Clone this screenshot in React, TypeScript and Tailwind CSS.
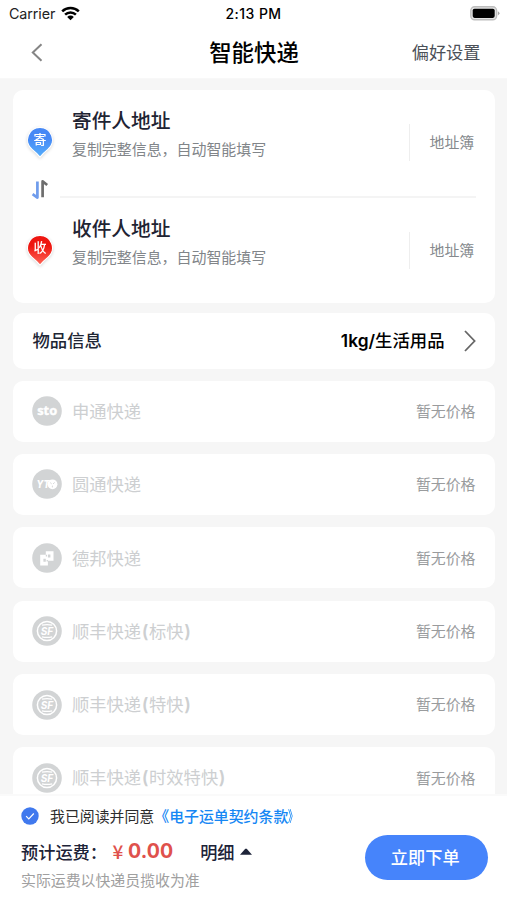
import { useState } from "react";

type Logo = "sto" | "yto" | "deppon" | "sf";

const couriers: { name: string; suffix?: string; logo: Logo }[] = [
  { name: "申通快递", logo: "sto" },
  { name: "圆通快递", logo: "yto" },
  { name: "德邦快递", logo: "deppon" },
  { name: "顺丰快递", suffix: "标快", logo: "sf" },
  { name: "顺丰快递", suffix: "特快", logo: "sf" },
  { name: "顺丰快递", suffix: "时效特快", logo: "sf" },
];

function StatusBar() {
  return (
    <div className="grid h-[27px] grid-cols-3 items-center pl-[9px] pr-[7px] font-['Inter'] text-[14.3px]">
      <div className="flex items-center gap-[6px] text-[#222]">
        <span className="tracking-[-0.1px]">Carrier</span>
        <svg width="19" height="15" viewBox="0 0 19 15">
          <g fill="none" stroke="#000" strokeWidth="2.5">
            <path d="M1.2 5.4a11.8 11.8 0 0 1 16.6 0" />
            <path d="M4.1 8.6a7.7 7.7 0 0 1 10.8 0" />
          </g>
          <path d="M6.2 10.9a4.7 4.7 0 0 1 6.6 0L9.5 14.3z" />
        </svg>
      </div>
      <span className="-ml-[2px] text-center text-[14px] font-medium tracking-[0.45px] text-black">2:13 PM</span>
      <svg className="-mr-[1px] ml-auto" width="31" height="15" viewBox="0 0 31 15">
        <rect x="0.8" y="0.8" width="25.8" height="13" rx="3.8" fill="#e4e4e4" stroke="#bdbdbd" strokeWidth="1.4" />
        <rect x="2.7" y="2.7" width="22" height="9.2" rx="1.8" />
        <path d="M27.9 5.2q3.2 2.1 0 4.4z" fill="#a5a5a5" />
      </svg>
    </div>
  );
}

function Pin({ label, from, to }: { label: string; from: string; to: string }) {
  const id = label === "寄" ? "pin-from" : "pin-to";
  return (
    <svg className="shrink-0 overflow-visible drop-shadow-[0_1px_1.5px_rgba(0,0,0,0.16)]" width="26" height="34" viewBox="0 0 26 34">
      <defs>
        <linearGradient id={id} x1="0" y1="0" x2="0" y2="1">
          <stop offset="0.35" stopColor={from} />
          <stop offset="1" stopColor={to} />
        </linearGradient>
      </defs>
      <path
        d="M13 .4a12.4 12.4 0 0 1 7.9 22Q16.6 25.8 13 30.2 9.4 25.8 5.1 22.4A12.4 12.4 0 0 1 13 .4z"
        fill={`url(#${id})`}
        stroke="#fff"
        strokeWidth="1.2"
      />
      <text x="13" y="17.3" textAnchor="middle" fill="#fff" fontSize="13" fontWeight="500">
        {label}
      </text>
    </svg>
  );
}

function AddressRow({ title, children }: { title: string; children: React.ReactNode }) {
  return (
    <div className="flex h-[62px] items-start">
      <div className="w-[45px] pt-[21px]">{children}</div>
      <div className="flex-1">
        <h2 className="text-[19.7px] font-medium leading-7 text-[#1f2433]">{title}</h2>
        <p className="mt-[3px] text-[14.95px] leading-6 text-[#818589]">复制完整信息，自动智能填写</p>
      </div>
      <button className="mt-[18px] h-[37px] w-[86px] border-l border-[#eee] pl-[20px] text-left text-[14.9px] text-[#85898d]">
        地址簿
      </button>
    </div>
  );
}

function CourierLogo({ logo }: { logo: Logo }) {
  return (
    <svg className="shrink-0" width="30" height="30" viewBox="0 0 30 30">
      <circle cx="15" cy="15" r="14.8" fill="#d2d4d5" />
      {logo === "sto" && (
        <text x="15.2" y="19" textAnchor="middle" fill="#fff" stroke="#fff" strokeWidth="0.4" fontFamily="Open Sans" fontWeight="700" fontSize="13" textLength="20" lengthAdjust="spacingAndGlyphs">
          sto
        </text>
      )}
      {logo === "yto" && (
        <>
          <text x="4.6" y="18.8" fill="#fff" fontFamily="Inter" fontWeight="800" fontStyle="italic" fontSize="11" textLength="13" lengthAdjust="spacingAndGlyphs">
            YT
          </text>
          <circle cx="20.5" cy="15.3" r="4.9" fill="#fff" />
          <path d="M18.2 13.6l1.5 1.3M22.6 13.4l-1.5 1.6M20.4 16.6v1.8" stroke="#d2d4d5" strokeWidth="0.9" fill="none" />
        </>
      )}
      {logo === "deppon" && (
        <>
          <path d="M8.2 11.8h5.6V8.2h7.7v9.6h-5.6v4.6H8.2z" fill="#fff" />
          <path d="M15.9 11.6h2.5v2.8h-2.5zM11.4 15.8h2.4v3h-2.4z" fill="#d2d4d5" />
          <path d="M13.8 11.8h1.2v1.8h-1.2zM14.6 17h1.3v1.6h-1.3z" fill="#d2d4d5" />
        </>
      )}
      {logo === "sf" && (
        <>
          <circle cx="15" cy="15" r="9.6" fill="none" stroke="#fff" strokeWidth="1.5" />
          <path d="M10 9.1Q15 8 20.2 9.1M10 20.9q5 1.1 10.2 0" fill="none" stroke="#fff" strokeWidth="1.2" />
          <text x="15" y="18.9" textAnchor="middle" fill="#fff" fontFamily="Inter" fontWeight="700" fontStyle="italic" fontSize="11" textLength="12.5" lengthAdjust="spacingAndGlyphs">
            SF
          </text>
        </>
      )}
    </svg>
  );
}

export default function App() {
  const [agreed, setAgreed] = useState(true);

  return (
    <div className="flex h-[900px] w-[507px] flex-col overflow-hidden bg-[#f6f6f6] font-['Noto_Sans_CJK_SC',sans-serif]">
      <header className="h-[79px] shrink-0 border-b border-[#f8f8f8] bg-white">
        <StatusBar />
        <div className="grid h-[50px] grid-cols-3 items-center pl-[30.5px] pr-[26.5px]">
          <button aria-label="返回">
            <svg width="12" height="19" viewBox="0 0 12 19" fill="none" stroke="#858585" strokeWidth="2">
              <path d="M10.5 1.2 1.8 9.5l8.7 8.3" />
            </svg>
          </button>
          <h1 className="-ml-[3px] whitespace-nowrap text-center text-[22.4px] font-medium text-black">智能快递</h1>
          <button className="text-right text-[17.2px] text-[#4b5058]">偏好设置</button>
        </div>
      </header>

      <main className="min-h-0 flex-1 overflow-hidden px-[12.5px] pt-[11px]">
        <section className="h-[212.5px] rounded-[10px] bg-white pl-[14.5px] pt-[16px]">
          <AddressRow title="寄件人地址">
            <Pin label="寄" from="#4688f5" to="#55aefb" />
          </AddressRow>
          <div className="flex h-[45.5px] items-center">
            <svg className="mb-[3px] ml-[4px] shrink-0" width="18" height="21" viewBox="0 0 18 21" fill="none" strokeWidth="2.7" strokeLinejoin="round">
              <path d="M6.4 2.6v16L1.6 15.2" stroke="#6f9cec" />
              <path d="M11.6 18.2V2.4l4.6 3.6" stroke="#6e6e6e" />
            </svg>
            <div className="ml-[11px] mr-[19px] mt-[13px] h-[2px] flex-1 bg-[#f4f4f4]" />
          </div>
          <AddressRow title="收件人地址">
            <Pin label="收" from="#ee1610" to="#ff6658" />
          </AddressRow>
        </section>

        <section className="mt-[10px] flex h-[56px] items-center rounded-[10px] bg-white pl-5 pr-[19px]">
          <h2 className="text-[17.35px] font-medium text-[#202534]">物品信息</h2>
          <span className="ml-auto text-[17.35px] font-medium text-black">
            <span className="font-['Inter'] font-semibold">1kg/</span>生活用品
          </span>
          <svg className="ml-[19px]" width="12" height="22" viewBox="0 0 12 22" fill="none" stroke="#666" strokeWidth="1.8">
            <path d="M1 1l9.6 10L1 21" />
          </svg>
        </section>

        <ul className="mt-3 space-y-[12.4px]">
          {couriers.map((courier, i) => (
            <li key={i} className="flex h-[61px] items-center rounded-[10px] bg-white pl-[19.5px] pr-[19px]">
              <CourierLogo logo={courier.logo} />
              <span className="ml-[10px] text-[17.3px] text-[#cdcfd1]">
                {courier.name}
                {courier.suffix && (
                  <>
                    <span className="mx-[0.6px] font-['Inter'] text-[18px] font-semibold">(</span>
                    {courier.suffix}
                    <span className="mx-[0.6px] font-['Inter'] text-[18px] font-semibold">)</span>
                  </>
                )}
              </span>
              <span className="ml-auto text-[14.9px] text-[#999b9d]">暂无价格</span>
            </li>
          ))}
        </ul>
      </main>

      <footer className="h-[106px] shrink-0 border-t-2 border-[#fafafa] bg-white pl-[21px] pr-[19.5px] pt-[9px]">
        <div className="flex h-[22px] items-center text-[14.9px]">
          <button aria-label="同意条款" onClick={() => setAgreed(!agreed)}>
            <svg width="18" height="18" viewBox="0 0 18 18" fill="none">
              <circle cx="9" cy="9" r="8.7" fill={agreed ? "#4079ee" : "#ccc"} />
              <path d="M5.1 9.1l2.7 2.7 5-5.3" stroke="#fff" strokeWidth="1.2" />
            </svg>
          </button>
          <span className="ml-[11px] text-[#2d2d2d]">我已阅读并同意</span>
          <a className="flex font-medium text-[#1687f4]">
            <span>《</span>
            <span>电子运单契约条款</span>
            <span className="origin-left scale-x-[0.65]">》</span>
          </a>
        </div>
        <div className="flex justify-between">
          <div className="pt-[11px]">
            <div className="flex h-[27px] items-center whitespace-nowrap text-[17.2px] font-medium text-[#1d2338]">
              预计运费：
              <span className="ml-[2px] w-[18px] text-center text-[19px] text-[#df514c]">¥</span>
              <span className="ml-[1px] font-['Inter'] text-[19.5px] font-bold tracking-[0.1px] text-[#df514c]">0.00</span>
              <span className="ml-[27px]">明细</span>
              <svg className="ml-[5px]" width="12" height="7" viewBox="0 0 12 7">
                <path d="M0 6.7 5.3.7h1.4l5.3 6z" fill="#1d2338" />
              </svg>
            </div>
            <p className="mt-[5px] text-[14.9px] leading-5 text-[#a0a0a0]">实际运费以快递员揽收为准</p>
          </div>
          <button className="mt-[8px] h-[44.5px] w-[122.5px] rounded-full bg-[#4684fb] pr-[2px] text-[17.2px] font-medium text-white">
            立即下单
          </button>
        </div>
      </footer>
    </div>
  );
}
